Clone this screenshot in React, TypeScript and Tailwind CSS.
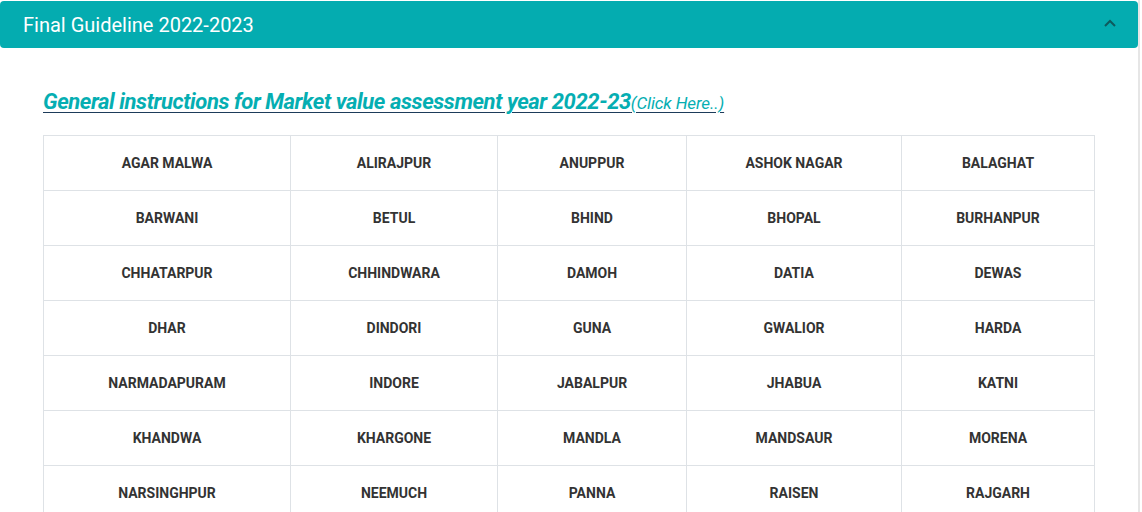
import React from 'react';

const districts = [
  ['AGAR MALWA', 'ALIRAJPUR', 'ANUPPUR', 'ASHOK NAGAR', 'BALAGHAT'],
  ['BARWANI', 'BETUL', 'BHIND', 'BHOPAL', 'BURHANPUR'],
  ['CHHATARPUR', 'CHHINDWARA', 'DAMOH', 'DATIA', 'DEWAS'],
  ['DHAR', 'DINDORI', 'GUNA', 'GWALIOR', 'HARDA'],
  ['NARMADAPURAM', 'INDORE', 'JABALPUR', 'JHABUA', 'KATNI'],
  ['KHANDWA', 'KHARGONE', 'MANDLA', 'MANDSAUR', 'MORENA'],
  ['NARSINGHPUR', 'NEEMUCH', 'PANNA', 'RAISEN', 'RAJGARH'],
];

const colWidths = ['w-[247px]', 'w-[207px]', 'w-[189px]', 'w-[215px]', 'w-[193px]'];

export default function App() {
  return (
    <div className="w-[1142px] h-[512px] overflow-hidden bg-white font-['Roboto',sans-serif]">
      <div className="w-[1140px] h-full pt-px border-r-2 border-[#e6e6e6]">
        <div className="h-[47px] bg-[#04acb0] rounded-[4px] flex items-center justify-between pl-[23px] pr-[21px]">
          <h2 className="text-[20px] text-white">Final Guideline 2022-2023</h2>
          <svg viewBox="0 0 14 10" className="w-[14px] h-[10px] -mt-[4px]" fill="none" stroke="#0e5a5d" strokeWidth="2">
            <path d="M2 8 L7 3 L12 8" />
          </svg>
        </div>

        <div className="pl-[43px] pt-[37px]">
          <a href="#" className="italic underline decoration-[#1d3b5a] underline-offset-[3px] text-[#05aeb2]">
            <span className="text-[22px] font-bold tracking-[-0.4px]">General instructions for Market value assessment year 2022-23</span>
            <span className="text-[17px] tracking-[-0.1px]">(Click Here..)</span>
          </a>

          <table className="mt-[17px] border-collapse border border-[#dee2e6] text-[14px] font-bold text-[#333]">
            <tbody>
              {districts.map((row, i) => (
                <tr key={i} className="h-[55px]">
                  {row.map((d, j) => (
                    <td key={d} className={`${colWidths[j]} border border-[#dee2e6] text-center align-middle`}>
                      {d}
                    </td>
                  ))}
                </tr>
              ))}
            </tbody>
          </table>
        </div>
      </div>
    </div>
  );
}
